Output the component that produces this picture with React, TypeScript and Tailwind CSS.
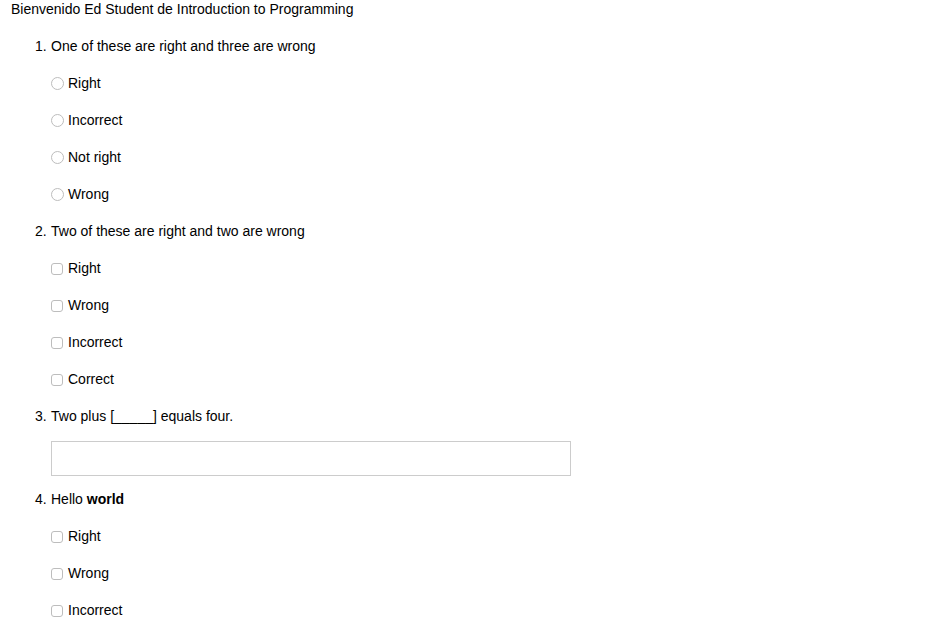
import React from 'react';

type Kind = 'radio' | 'check';

interface Question {
    n: number;
    title: React.ReactNode;
    kind: Kind | 'text';
    options?: string[];
}

const questions: Question[] = [
    { n: 1, title: 'One of these are right and three are wrong', kind: 'radio', options: ['Right', 'Incorrect', 'Not right', 'Wrong'] },
    { n: 2, title: 'Two of these are right and two are wrong', kind: 'check', options: ['Right', 'Wrong', 'Incorrect', 'Correct'] },
    { n: 3, title: 'Two plus [_____] equals four.', kind: 'text' },
    { n: 4, title: <>Hello <b className="font-bold">world</b></>, kind: 'check', options: ['Right', 'Wrong', 'Incorrect'] },
];

const Mark: React.FC<{ kind: Kind }> = ({ kind }) => (
    <span className="inline-flex shrink-0 w-[13px] h-[13px] items-center">
        <span
            className={`inline-block bg-white border border-[#bdbdbd] ${kind === 'radio' ? 'w-[13px] h-[13px] rounded-full' : 'w-[12px] h-[12px] rounded-[3px]'}`}
        />
    </span>
);

export default function App() {
    return (
        <div className="min-h-screen bg-white text-black pl-[11px] pt-[2px] text-[14px] leading-[15px] font-['Liberation_Sans',Arial,sans-serif]">
            <div className="h-[15px]">Bienvenido Ed Student de Introduction to Programming</div>

            <ol className="pl-[24px]">
                {questions.map((q) => (
                    <li key={q.n} className="flex flex-col">
                        {/* Question heading */}
                        <div className="flex h-[15px] mt-[22px]">
                            <span className="w-[16px]">{q.n}.</span>
                            <span>{q.title}</span>
                        </div>

                        {q.kind === 'text' ? (
                            <input
                                type="text"
                                className="ml-[16px] mt-[17px] mb-[-6px] w-[520px] h-[35px] border border-[#cccccc] outline-none px-2"
                            />
                        ) : (
                            q.options?.map((opt) => (
                                <label key={opt} className="flex items-center h-[15px] mt-[22px] ml-[16px] gap-[4px]">
                                    <Mark kind={q.kind as Kind} />
                                    <span>{opt}</span>
                                </label>
                            ))
                        )}
                    </li>
                ))}
            </ol>
        </div>
    );
}
